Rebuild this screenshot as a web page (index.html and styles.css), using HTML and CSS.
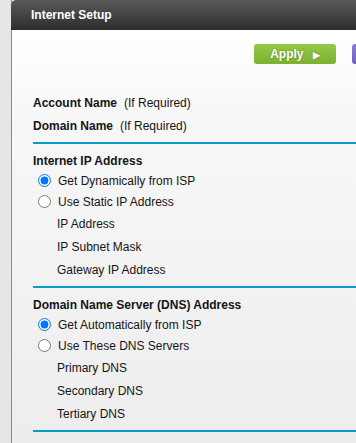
FILE: index.html
```html
<!DOCTYPE html>
<html lang="en">
<head>
    <meta charset="UTF-8">
    <meta name="viewport" content="width=device-width, initial-scale=1.0">
    <title>Internet Setup</title>
    <link rel="stylesheet" href="styles.css">
</head>
<body>
    <div class="page">
        <div class="header">Internet Setup</div>

        <div class="toolbar">
            <button class="btn btn-apply">Apply <span class="arrow">&#9654;</span></button>
            <button class="btn btn-cancel">Cancel</button>
        </div>

        <div class="content">
            <div class="row"><strong>Account Name</strong><span class="hint">(If Required)</span></div>
            <div class="row"><strong>Domain Name</strong><span class="hint">(If Required)</span></div>

            <div class="section">
                <div class="title">Internet IP Address</div>
                <label class="radio-row"><input type="radio" name="ip" checked> Get Dynamically from ISP</label>
                <label class="radio-row"><input type="radio" name="ip"> Use Static IP Address</label>
                <div class="row sub">IP Address</div>
                <div class="row sub">IP Subnet Mask</div>
                <div class="row sub">Gateway IP Address</div>
            </div>

            <div class="section">
                <div class="title">Domain Name Server (DNS) Address</div>
                <label class="radio-row"><input type="radio" name="dns" checked> Get Automatically from ISP</label>
                <label class="radio-row"><input type="radio" name="dns"> Use These DNS Servers</label>
                <div class="row sub">Primary DNS</div>
                <div class="row sub">Secondary DNS</div>
                <div class="row sub">Tertiary DNS</div>
            </div>
            <div class="section end"></div>
        </div>
    </div>
</body>
</html>
```

FILE: styles.css
```css
* {
    margin: 0;
    padding: 0;
    box-sizing: border-box;
}

body {
    background: #e6e6e6;
    font-family: "Liberation Sans", Arial, sans-serif;
    font-size: 12px;
    color: #151515;
    overflow: hidden;
    height: 100vh;
}

.page {
    margin-left: 11px;
    width: 480px;
    height: 100%;
    border-left: 1px solid #8a8a8a;
    background: linear-gradient(#ffffff 40px, #f7f7f7 120px, #ededed);
}

.header {
    height: 30px;
    margin-left: -1px;
    padding-left: 20px;
    line-height: 30px;
    font-size: 12px;
    font-weight: bold;
    color: #fff;
    background: linear-gradient(#5a5a5a, #2c2c2c);
    border-top-left-radius: 5px;
}

.toolbar {
    display: flex;
    gap: 16px;
    padding: 14px 0 0 242px;
    height: 61px;
}

.btn {
    flex-shrink: 0;
    width: 82px;
    height: 20px;
    border: none;
    border-radius: 3px;
    font-family: "Liberation Sans", Arial, sans-serif;
    font-size: 12px;
    font-weight: bold;
    color: #fff;
    text-shadow: 0 0 2px rgba(0, 0, 0, 0.3);
}

.btn-apply {
    background: linear-gradient(#94c846, #7cb032);
}

.arrow {
    font-size: 9px;
    margin-left: 6px;
}

.btn-cancel {
    background: linear-gradient(#8a7ed8, #6c5fc0);
}

.content {
    padding-left: 21px;
}

.row {
    display: flex;
    align-items: center;
    height: 23px;
}

.hint {
    margin-left: 7px;
}

.sub {
    padding-left: 24px;
}

.section {
    border-top: 2px solid #0c9acb;
    margin-top: 5px;
    padding-top: 8px;
}

.section.end {
    margin-top: 5px;
}

.title {
    display: flex;
    align-items: center;
    height: 18px;
    font-weight: bold;
}

.radio-row {
    display: flex;
    align-items: center;
    height: 21px;
}

.radio-row input {
    width: 13px;
    height: 13px;
    margin: 0 7px 0 5px;
}
```
